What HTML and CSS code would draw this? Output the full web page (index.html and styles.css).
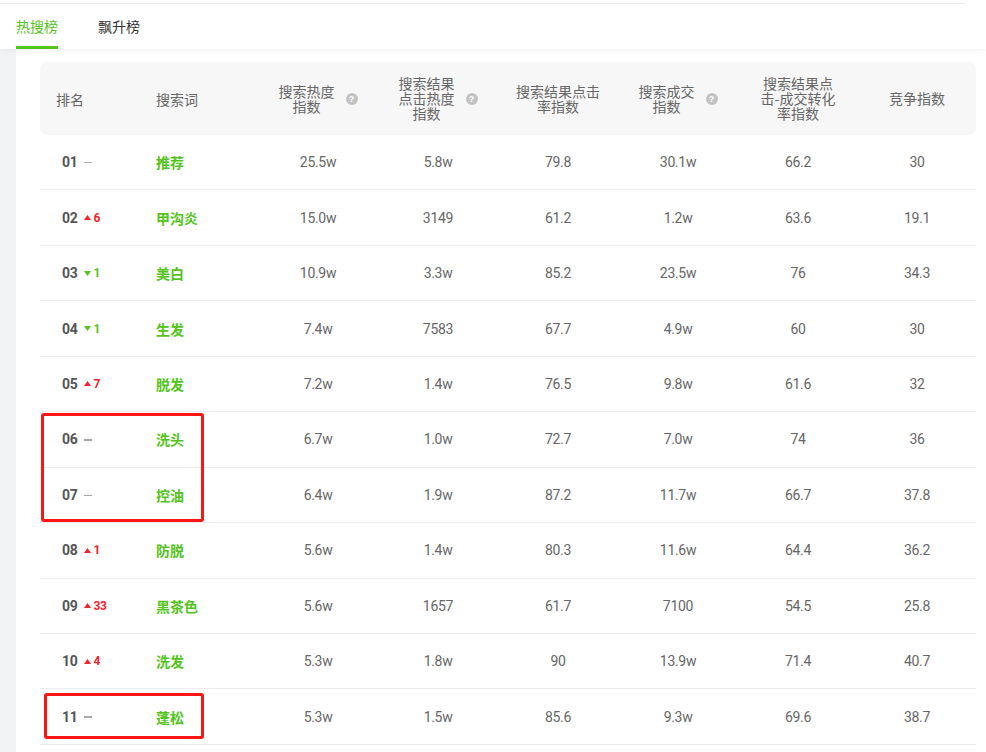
FILE: index.html
```html
<!DOCTYPE html>
<html lang="zh-CN">
<head>
<meta charset="utf-8">
<title>热搜榜</title>
<link rel="stylesheet" href="styles.css">
</head>
<body>
<div class="topbar">
  <div class="rule"></div>
  <div class="tabs">
    <div class="tab active">热搜榜</div>
    <div class="tab">飘升榜</div>
  </div>
</div>
<div class="main">
  <div class="table">
    <div class="thead">
      <div class="th left">排名</div>
      <div class="th left">搜索词</div>
      <div class="th"><span class="tt">搜索热度<br>指数</span><span class="q">?</span></div>
      <div class="th"><span class="tt">搜索结果<br>点击热度<br>指数</span><span class="q">?</span></div>
      <div class="th"><span class="tt">搜索结果点击<br>率指数</span></div>
      <div class="th"><span class="tt">搜索成交<br>指数</span><span class="q">?</span></div>
      <div class="th"><span class="tt">搜索结果点<br>击-成交转化<br>率指数</span></div>
      <div class="th"><span class="tt">竞争指数</span></div>
    </div>

    <div class="tr"><div class="td rank"><b>01</b><span class="flat"></span></div><div class="td word">推荐</div><div class="td">25.5w</div><div class="td">5.8w</div><div class="td">79.8</div><div class="td">30.1w</div><div class="td">66.2</div><div class="td">30</div></div>
    <div class="tr"><div class="td rank"><b>02</b><span class="up"><svg viewBox="0 0 7 5" class="tri"><path d="M3.5 0L7 5H0z"/></svg>6</span></div><div class="td word">甲沟炎</div><div class="td">15.0w</div><div class="td">3149</div><div class="td">61.2</div><div class="td">1.2w</div><div class="td">63.6</div><div class="td">19.1</div></div>
    <div class="tr"><div class="td rank"><b>03</b><span class="down"><svg viewBox="0 0 7 5" class="tri"><path d="M0 0H7L3.5 5z"/></svg>1</span></div><div class="td word">美白</div><div class="td">10.9w</div><div class="td">3.3w</div><div class="td">85.2</div><div class="td">23.5w</div><div class="td">76</div><div class="td">34.3</div></div>
    <div class="tr"><div class="td rank"><b>04</b><span class="down"><svg viewBox="0 0 7 5" class="tri"><path d="M0 0H7L3.5 5z"/></svg>1</span></div><div class="td word">生发</div><div class="td">7.4w</div><div class="td">7583</div><div class="td">67.7</div><div class="td">4.9w</div><div class="td">60</div><div class="td">30</div></div>
    <div class="tr"><div class="td rank"><b>05</b><span class="up"><svg viewBox="0 0 7 5" class="tri"><path d="M3.5 0L7 5H0z"/></svg>7</span></div><div class="td word">脱发</div><div class="td">7.2w</div><div class="td">1.4w</div><div class="td">76.5</div><div class="td">9.8w</div><div class="td">61.6</div><div class="td">32</div></div>
    <div class="tr"><div class="td rank"><b>06</b><span class="flat"></span></div><div class="td word">洗头</div><div class="td">6.7w</div><div class="td">1.0w</div><div class="td">72.7</div><div class="td">7.0w</div><div class="td">74</div><div class="td">36</div></div>
    <div class="tr"><div class="td rank"><b>07</b><span class="flat"></span></div><div class="td word">控油</div><div class="td">6.4w</div><div class="td">1.9w</div><div class="td">87.2</div><div class="td">11.7w</div><div class="td">66.7</div><div class="td">37.8</div></div>
    <div class="tr"><div class="td rank"><b>08</b><span class="up"><svg viewBox="0 0 7 5" class="tri"><path d="M3.5 0L7 5H0z"/></svg>1</span></div><div class="td word">防脱</div><div class="td">5.6w</div><div class="td">1.4w</div><div class="td">80.3</div><div class="td">11.6w</div><div class="td">64.4</div><div class="td">36.2</div></div>
    <div class="tr"><div class="td rank"><b>09</b><span class="up"><svg viewBox="0 0 7 5" class="tri"><path d="M3.5 0L7 5H0z"/></svg>33</span></div><div class="td word">黑茶色</div><div class="td">5.6w</div><div class="td">1657</div><div class="td">61.7</div><div class="td">7100</div><div class="td">54.5</div><div class="td">25.8</div></div>
    <div class="tr"><div class="td rank"><b>10</b><span class="up"><svg viewBox="0 0 7 5" class="tri"><path d="M3.5 0L7 5H0z"/></svg>4</span></div><div class="td word">洗发</div><div class="td">5.3w</div><div class="td">1.8w</div><div class="td">90</div><div class="td">13.9w</div><div class="td">71.4</div><div class="td">40.7</div></div>
    <div class="tr"><div class="td rank"><b>11</b><span class="flat"></span></div><div class="td word">蓬松</div><div class="td">5.3w</div><div class="td">1.5w</div><div class="td">85.6</div><div class="td">9.3w</div><div class="td">69.6</div><div class="td">38.7</div></div>
  </div>
</div>
<div class="mark mark-a"></div>
<div class="mark mark-b"></div>
</body>
</html>
```

FILE: styles.css
```css
* { box-sizing: border-box; }
html, body { margin: 0; padding: 0; }
body {
  background: #f2f3f5;
  font-family: "Noto Sans CJK SC", "Noto Sans", sans-serif;
  font-size: 14px;
  color: #666;
  width: 986px;
  height: 752px;
  overflow: hidden;
  position: relative;
}
.topbar {
  background: #fff;
  height: 49px;
  padding-top: 3px;
  position: relative;
  z-index: 2;
  box-shadow: 0 3px 6px rgba(0, 0, 0, 0.035);
}
.rule {
  width: 965px;
  height: 1px;
  background: #ebebeb;
}
.tabs {
  display: flex;
  gap: 40px;
  padding-left: 16px;
  height: 45px;
}
.tab {
  height: 45px;
  line-height: 44px;
  font-size: 14px;
  color: #333;
  border-bottom: 3px solid transparent;
}
.tab.active {
  color: #52c41a;
  border-bottom-color: #52c41a;
}
.main {
  background: #fff;
  margin-left: 16px;
  padding: 13px 10px 0 24px;
  height: 703px;
}
.table { width: 936px; }
.thead, .tr {
  display: grid;
  grid-template-columns: 100px 118px 120px 120px 120px 120px 120px 118px;
}
.thead {
  background: #f7f7f7;
  border-radius: 8px;
  height: 73px;
}
.th {
  display: flex;
  align-items: center;
  justify-content: center;
  gap: 11px;
  color: #666;
  font-size: 14px;
  padding: 0 4px;
}
.th.left { justify-content: flex-start; padding-left: 16px; }
.tt { text-align: center; line-height: 15px; }
.q {
  width: 12px;
  height: 12px;
  border-radius: 50%;
  background: #c2c2c2;
  color: #fff;
  font-size: 9px;
  font-weight: 700;
  line-height: 12px;
  text-align: center;
  font-family: "Liberation Sans", sans-serif;
  flex: none;
}
.tr {
  height: 55.45px;
  border-bottom: 1px solid #ececec;
}
.td {
  display: flex;
  align-items: center;
  justify-content: center;
  font-family: Roboto, "Noto Sans CJK SC", sans-serif;
  font-size: 14px;
  letter-spacing: -0.3px;
  color: #666;
}
.td.rank {
  justify-content: flex-start;
  padding-left: 22px;
  gap: 7px;
}
.td.rank b {
  color: #555;
  font-weight: 700;
  font-size: 14px;
}
.flat {
  display: block;
  width: 8px;
  height: 1.5px;
  background: #a8a8a8;
  margin-top: 1px;
}
.up, .down {
  display: flex;
  align-items: center;
  gap: 2px;
  font-size: 12px;
  font-weight: 700;
}
.up { color: #f5222d; }
.down { color: #52c41a; }
.tri { width: 7px; height: 5px; fill: currentColor; }
.td.word {
  justify-content: flex-start;
  padding-left: 16px;
  color: #52c41a;
  font-family: "Noto Sans CJK SC", sans-serif;
  font-weight: 700;
  letter-spacing: 0;
}
.mark {
  position: absolute;
  border: 3px solid #ff1414;
  border-radius: 3px;
  z-index: 3;
}
.mark-a { left: 41px; top: 413px; width: 163px; height: 109px; }
.mark-b { left: 44px; top: 693px; width: 160px; height: 46px; }
```
